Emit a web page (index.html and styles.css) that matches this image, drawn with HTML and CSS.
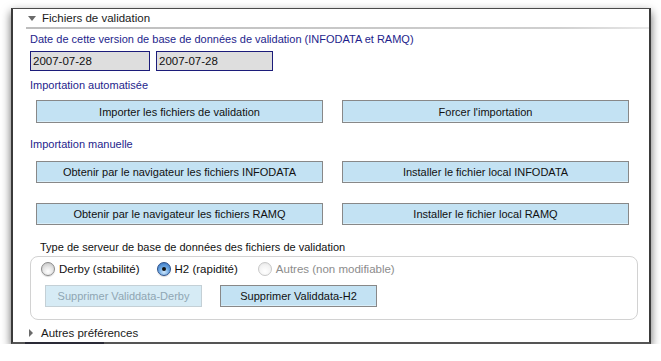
FILE: index.html
```html
<!DOCTYPE html>
<html>
<head>
    <title>Préférences</title>
    <link rel="stylesheet" href="styles.css">
</head>
<body>
    <div class="window">
        <div class="section-head">
            <span class="tri tri-open"></span>Fichiers de validation
        </div>

        <div class="section-body">
            <div class="label label-date">Date de cette version de base de données de validation (INFODATA et RAMQ)</div>
            <div class="dates">
                <div class="field field-1">2007-07-28</div>
                <div class="field field-2">2007-07-28</div>
            </div>

            <div class="label label-auto">Importation automatisée</div>
            <div class="btn-grid grid-auto">
                <button class="btn btn-tall">Importer les fichiers de validation</button>
                <button class="btn btn-tall">Forcer l'importation</button>
            </div>

            <div class="label label-manual">Importation manuelle</div>
            <div class="btn-grid grid-manual">
                <button class="btn">Obtenir par le navigateur les fichiers INFODATA</button>
                <button class="btn">Installer le fichier local INFODATA</button>
                <button class="btn">Obtenir par le navigateur les fichiers RAMQ</button>
                <button class="btn">Installer le fichier local RAMQ</button>
            </div>

            <div class="plain-label">Type de serveur de base de données des fichiers de validation</div>
            <div class="server-box">
                <div class="radios">
                    <label class="radio-item"><span class="radio"></span>Derby (stabilité)</label>
                    <label class="radio-item item-h2"><span class="radio radio-on"></span>H2 (rapidité)</label>
                    <label class="radio-item item-other disabled"><span class="radio radio-off"></span>Autres (non modifiable)</label>
                </div>
                <div class="server-buttons">
                    <button class="btn btn-small btn-disabled">Supprimer Validdata-Derby</button>
                    <button class="btn btn-small btn-h2">Supprimer Validdata-H2</button>
                </div>
            </div>
        </div>

        <div class="section-head section-closed">
            <span class="tri tri-closed"></span>Autres préférences
        </div>
        <div class="bottom-mark"></div>
    </div>
</body>
</html>
```

FILE: styles.css
```css
/* GENERAL */
body {
    margin: 0;
    padding: 0;
    background-color: #fff;
    font-family: 'Liberation Sans', Arial, sans-serif;
    font-size: 11px;
    color: #111;
}

.window {
    box-sizing: border-box;
    width: 640px;
    height: 336px;
    margin: 8px 0 0 11px;
    border: 1px solid #4a4a4a;
    border-left: 2px solid #3a3a3a;
    border-right: 2px solid #3a3a3a;
    border-bottom: 2px solid #555;
    background-color: #fff;
    box-shadow: 0 4px 9px rgba(0, 0, 0, 0.6);
    position: relative;
}


/* SECTION HEADERS */
.section-head {
    display: flex;
    align-items: center;
    height: 18px;
    margin-left: 13px;
    font-size: 11.5px;
    color: #1a1a1a;
    border-bottom: 2px solid transparent;
    border-image: linear-gradient(to right, #bdbdbd, #cfcfcf 85%, #e8e8e8) 1;
}

.section-closed {
    border: none;
    margin-top: 6px;
    height: 14px;
}

.tri {
    display: inline-block;
    width: 0;
    height: 0;
}

.tri-open {
    margin-left: 2px;
    margin-right: 6px;
    border-left: 4px solid transparent;
    border-right: 4px solid transparent;
    border-top: 5px solid #6a6a6a;
}

.tri-closed {
    margin-left: 3px;
    margin-right: 8px;
    border-top: 4px solid transparent;
    border-bottom: 4px solid transparent;
    border-left: 4px solid #6a6a6a;
}

.bottom-mark {
    position: absolute;
    left: 12px;
    bottom: -2px;
    width: 79px;
    height: 2px;
    background-color: #2a2a36;
}


/* CONTENT */
.section-body {
    padding-left: 17px;
}

.label {
    color: #1e1e8c;
    line-height: 14px;
}

.label-date {
    margin-top: 3px;
}

.label-auto {
    margin-top: 7px;
}

.label-manual {
    margin-top: 14px;
}

.dates {
    display: flex;
    gap: 6px;
    margin-top: 5px;
}

.field {
    box-sizing: border-box;
    height: 20px;
    line-height: 18px;
    padding-left: 2px;
    background-color: #dedede;
    border: 1px solid #1c1c7a;
    font-size: 11.5px;
}

.field-1 {
    width: 120px;
}

.field-2 {
    width: 117px;
}


/* BUTTONS */
.btn-grid {
    display: grid;
    grid-template-columns: 287px 287px;
    column-gap: 19px;
    margin-left: 6px;
}

.grid-auto {
    margin-top: 8px;
}

.grid-manual {
    margin-top: 10px;
    row-gap: 20px;
}

.btn {
    box-sizing: border-box;
    height: 22px;
    padding: 0;
    font-family: 'Liberation Sans', Arial, sans-serif;
    font-size: 11px;
    color: #111;
    background-color: #c3e2f3;
    border: 1px solid #888;
    border-radius: 0;
    box-shadow: inset 0 -1px 0 #d9eef9;
}

.btn-tall {
    height: 23px;
}


/* SERVER TYPE */
.plain-label {
    margin-top: 15px;
    margin-left: 10px;
    line-height: 14px;
    color: #111;
}

.server-box {
    box-sizing: border-box;
    width: 608px;
    height: 64px;
    margin-top: 2px;
    padding: 4px 0 0 10px;
    border: 1px solid #d2d2d2;
    border-radius: 8px;
}

.radios {
    display: flex;
    align-items: center;
    height: 16px;
}

.radio-item {
    display: flex;
    align-items: center;
    font-size: 11.5px;
    color: #111;
}

.item-h2 {
    margin-left: 17px;
}

.item-other {
    margin-left: 20px;
}

.disabled {
    color: #8c8c8c;
}

.radio {
    box-sizing: border-box;
    width: 14px;
    height: 14px;
    margin-right: 4px;
    border-radius: 50%;
    border: 1px solid #8a8a8a;
    background: radial-gradient(circle at 50% 70%, #ffffff 0%, #e6e6e6 45%, #bcbcbc 100%);
    box-shadow: 0 1px 1px rgba(0, 0, 0, 0.15);
}

.radio-on {
    position: relative;
    border-color: #2a4f8a;
    background: radial-gradient(circle at 50% 75%, #cfe7fb 0%, #6fa9e3 45%, #2f6dbd 100%);
}

.radio-on::after {
    content: "";
    position: absolute;
    left: 4px;
    top: 4px;
    width: 4px;
    height: 4px;
    border-radius: 50%;
    background-color: #111;
}

.radio-off {
    border-color: #c8c8c8;
    background: radial-gradient(circle at 50% 70%, #ffffff 0%, #f2f2f2 60%, #dedede 100%);
    box-shadow: none;
}

.server-buttons {
    display: flex;
    gap: 18px;
    margin-top: 8px;
    margin-left: 4px;
}

.btn-small {
    width: 157px;
    height: 22px;
}

.btn-disabled {
    color: #8fa6b3;
    background-color: #d6ebf5;
    border-color: #c4d0d6;
    box-shadow: none;
}
```
